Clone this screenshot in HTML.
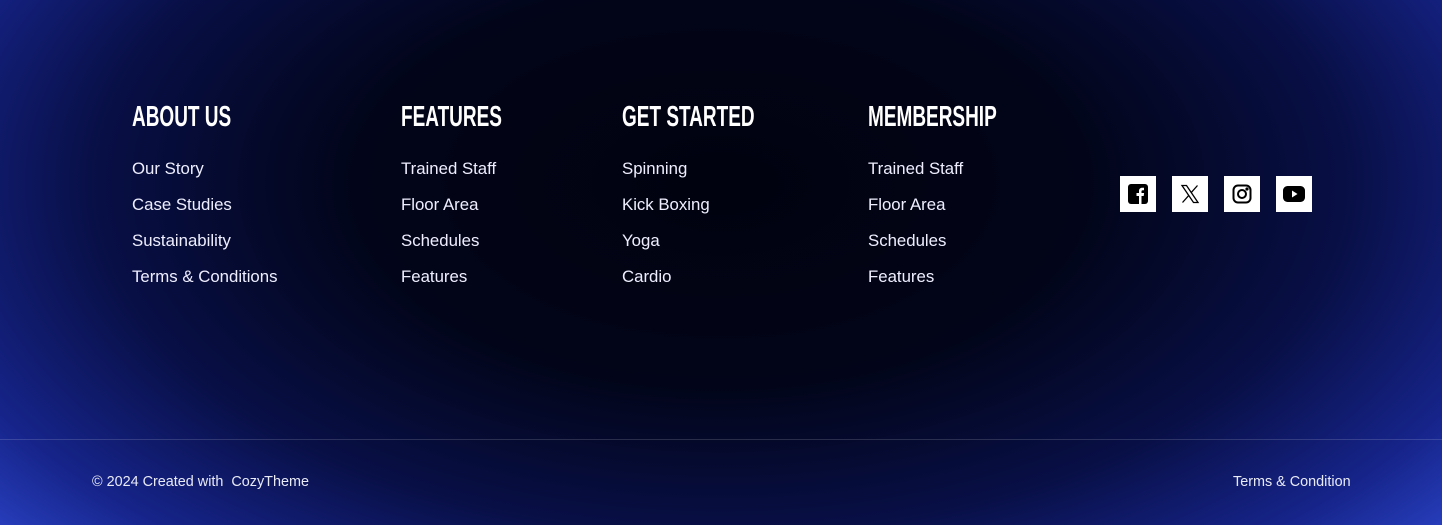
<!DOCTYPE html>
<html><head><meta charset="utf-8"><style>
*{margin:0;padding:0;box-sizing:border-box}
body{width:1442px;height:525px;overflow:hidden;font-family:"Liberation Sans",sans-serif;color:#fff;
background:radial-gradient(ellipse 72% 110% at 50% 35%,#01020f 0%,#020519 35%,#080f45 60%,#16248a 80%,#3350e0 100%);position:relative}
h3{position:absolute;top:101px;font-family:"Liberation Sans",sans-serif;font-weight:bold;font-size:29px;transform:scaleX(0.655);transform-origin:top left;white-space:nowrap}
ul{position:absolute;top:159px;list-style:none}
li{font-size:16.8px;height:36px;line-height:20px;color:#eef;white-space:nowrap}
.line{position:absolute;left:0;right:0;top:439px;height:1px;background:rgba(255,255,255,.15)}
.f{position:absolute;top:474px;font-size:14.4px;color:#e8eaf5;white-space:nowrap}
.ic{position:absolute;top:176px;width:36px;height:36px;background:#fff;display:flex;align-items:center;justify-content:center}
</style></head><body>
<h3 style="left:132px">ABOUT US</h3>
<h3 style="left:401px">FEATURES</h3>
<h3 style="left:622px">GET STARTED</h3>
<h3 style="left:868px">MEMBERSHIP</h3>
<ul style="left:132px"><li>Our Story</li><li>Case Studies</li><li>Sustainability</li><li>Terms &amp; Conditions</li></ul>
<ul style="left:401px"><li>Trained Staff</li><li>Floor Area</li><li>Schedules</li><li>Features</li></ul>
<ul style="left:622px"><li>Spinning</li><li>Kick Boxing</li><li>Yoga</li><li>Cardio</li></ul>
<ul style="left:868px"><li>Trained Staff</li><li>Floor Area</li><li>Schedules</li><li>Features</li></ul>
<div class="ic" style="left:1120px"><svg width="20" height="20" viewBox="0 0 20 20"><rect x="0" y="0" width="20" height="20" rx="3" fill="#000"/><path d="M11 20V12H8.5V9H11V7C11 4.8 12.3 3.7 14.3 3.7c.9 0 1.7.1 1.7.1V6.3h-1.2c-1 0-1.3.6-1.3 1.3V9h2.6l-.4 3H13.5v8z" fill="#fff"/></svg></div>
<div class="ic" style="left:1172px"><svg width="20" height="20" viewBox="0 0 20 20" fill="none" stroke="#000" stroke-width="1.3"><path d="M2 1.5h4.5l11.5 17h-4.5z"/><path d="M17.5 1.5l-6.5 7.3M9 11.2l-6.5 7.3"/></svg></div>
<div class="ic" style="left:1224px"><svg width="20" height="20" viewBox="0 0 20 20" fill="none" stroke="#000" stroke-width="2"><rect x="1.5" y="1.5" width="17" height="17" rx="4.5"/><circle cx="10" cy="10" r="4"/><circle cx="15" cy="5" r=".6" fill="#000"/></svg></div>
<div class="ic" style="left:1276px"><svg width="22" height="16" viewBox="0 0 22 16"><rect x="0" y="0" width="22" height="16" rx="4.5" fill="#000"/><path d="M9 4.5l5.5 3.5L9 11.5z" fill="#fff"/></svg></div>
<div class="line"></div>
<div class="f" style="left:92px">© 2024 Created with &nbsp;CozyTheme</div>
<div class="f" style="left:1233px">Terms &amp; Condition</div>
</body></html>
